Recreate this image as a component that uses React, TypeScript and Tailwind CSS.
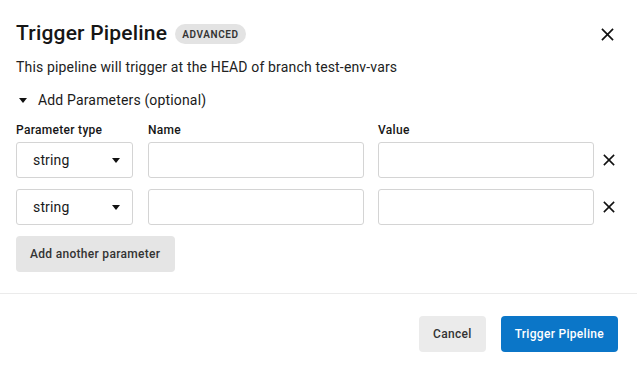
const font = { fontFamily: "Roboto, 'Liberation Sans', sans-serif" };

function CloseIcon({ size }: { size: number }) {
  return (
    <svg width={size} height={size} viewBox="0 0 14 14" fill="none">
      <path d="M1 1L13 13M13 1L1 13" stroke="#111" strokeWidth="1.8" />
    </svg>
  );
}

function Caret() {
  return (
    <svg width="8" height="5" viewBox="0 0 8 5">
      <path d="M0 0H8L4 5Z" fill="#111" />
    </svg>
  );
}

function ParamRow() {
  return (
    <div className="flex items-center">
      <div className="flex h-9 w-[117px] items-center justify-between rounded-[3px] border border-[#d4d4d4] pl-4 pr-[12px] text-sm tracking-[0.15px] text-[#1a1a1a]">
        <span>string</span>
        <Caret />
      </div>
      <div className="ml-[15px] h-9 w-[216px] rounded-[3px] border border-[#d4d4d4]" />
      <div className="ml-[14px] h-9 w-[216px] rounded-[3px] border border-[#d4d4d4]" />
      <div className="ml-[9px]">
        <CloseIcon size={12} />
      </div>
    </div>
  );
}

export default function App() {
  return (
    <div className="h-[372px] w-[637px] bg-white text-[#1a1a1a]" style={font}>
      <div className="px-4 pt-5">
        {/* Header */}
        <div className="flex h-7 items-center justify-between">
          <div className="flex items-center gap-2">
            <h1 className="text-[21px] font-medium tracking-[0.2px] text-[#161616]">Trigger Pipeline</h1>
            <span className="flex h-5 items-center rounded-full bg-[#e3e3e3] px-[7px] text-[10px] font-semibold tracking-[0.6px] text-[#333]">
              ADVANCED
            </span>
          </div>
          <div className="mr-[7px]">
            <CloseIcon size={13} />
          </div>
        </div>

        <p className="mt-[9px] text-sm leading-5 tracking-[0.16px] text-[#222]">
          This pipeline will trigger at the HEAD of branch test-env-vars
        </p>

        <div className="mt-[13px] flex h-5 items-center text-sm tracking-[0.16px]">
          <span className="ml-[3px] mr-[11px]">
            <Caret />
          </span>
          <span>Add Parameters (optional)</span>
        </div>

        {/* Parameters */}
        <div className="mt-3 flex text-xs font-medium leading-4 tracking-[0.3px] text-[#161616]">
          <span className="w-[132px]">Parameter type</span>
          <span className="w-[230px]">Name</span>
          <span>Value</span>
        </div>
        <div className="mt-1 flex flex-col gap-[11px]">
          <ParamRow />
          <ParamRow />
        </div>
        <button className="mt-[11px] flex h-9 w-[159px] items-center rounded-[4px] bg-[#e5e5e5] px-[14px] text-xs font-medium tracking-[0.3px] text-[#333]">
          Add another parameter
        </button>
      </div>

      <div className="mt-[21px] border-t border-[#ebebeb]" />

      <div className="flex justify-end gap-[15px] pr-[19px] pt-[22px]">
        <button className="flex h-9 items-center rounded-[4px] bg-[#ebebeb] px-[14px] text-xs font-medium tracking-[0.3px] text-[#333]">
          Cancel
        </button>
        <button className="flex h-9 items-center rounded-[4px] bg-[#0b76c8] px-[14px] text-xs font-medium tracking-[0.3px] text-white">
          Trigger Pipeline
        </button>
      </div>
    </div>
  );
}
